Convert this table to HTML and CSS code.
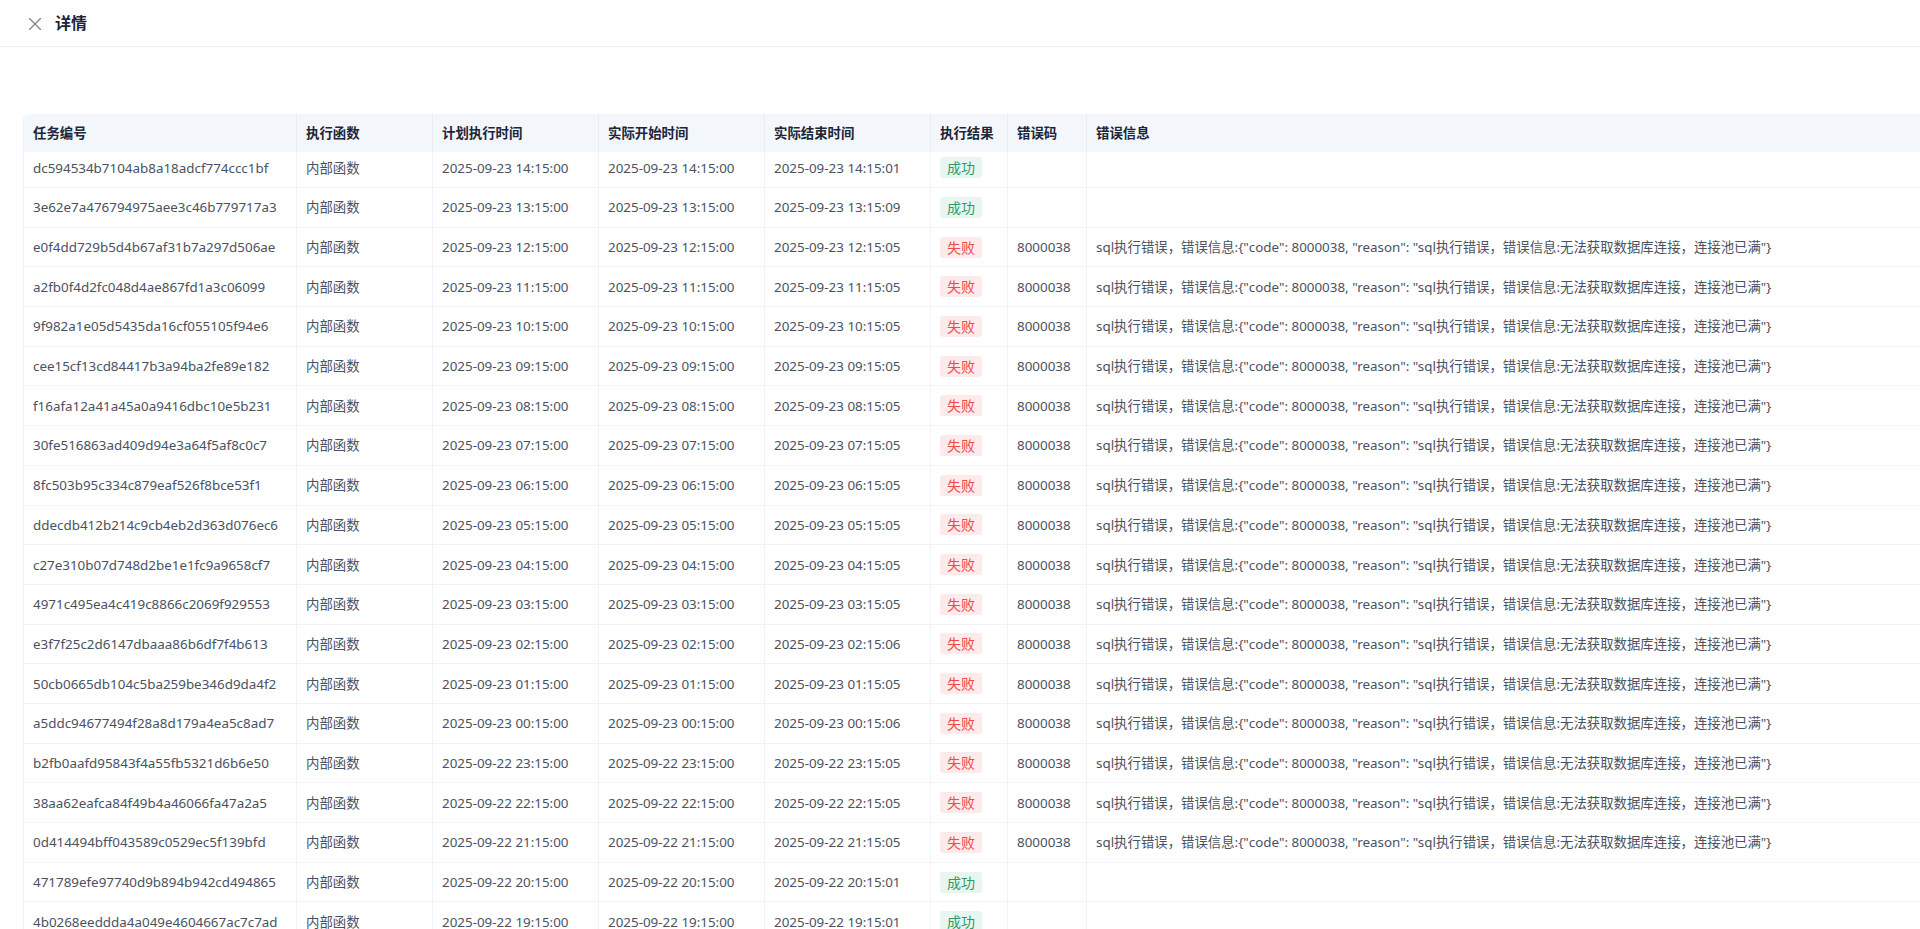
FILE: index.html
```html
<!DOCTYPE html>
<html lang="zh-CN">
<head>
<meta charset="utf-8">
<title>详情</title>
<link rel="stylesheet" href="styles.css">
</head>
<body>
<header class="topbar">
  <span class="close" aria-label="关闭">
    <svg width="12" height="12" viewBox="0 0 12 12"><path d="M0.5 0.5 L11.5 11.5 M11.5 0.5 L0.5 11.5" stroke="#7a808a" stroke-width="1.2" fill="none" stroke-linecap="round"/></svg>
  </span>
  <h1 class="title">详情</h1>
</header>
<main class="content">
  <div class="table">
    <div class="row head">
      <div class="cell">任务编号</div>
      <div class="cell">执行函数</div>
      <div class="cell">计划执行时间</div>
      <div class="cell">实际开始时间</div>
      <div class="cell">实际结束时间</div>
      <div class="cell">执行结果</div>
      <div class="cell">错误码</div>
      <div class="cell">错误信息</div>
    </div>
    <div class="body">
      <div class="row"><div class="cell">dc594534b7104ab8a18adcf774ccc1bf</div><div class="cell">内部函数</div><div class="cell">2025-09-23 14:15:00</div><div class="cell">2025-09-23 14:15:00</div><div class="cell">2025-09-23 14:15:01</div><div class="cell"><span class="tag ok">成功</span></div><div class="cell"></div><div class="cell"></div></div>
      <div class="row"><div class="cell">3e62e7a476794975aee3c46b779717a3</div><div class="cell">内部函数</div><div class="cell">2025-09-23 13:15:00</div><div class="cell">2025-09-23 13:15:00</div><div class="cell">2025-09-23 13:15:09</div><div class="cell"><span class="tag ok">成功</span></div><div class="cell"></div><div class="cell"></div></div>
      <div class="row"><div class="cell">e0f4dd729b5d4b67af31b7a297d506ae</div><div class="cell">内部函数</div><div class="cell">2025-09-23 12:15:00</div><div class="cell">2025-09-23 12:15:00</div><div class="cell">2025-09-23 12:15:05</div><div class="cell"><span class="tag fail">失败</span></div><div class="cell">8000038</div><div class="cell">sql执行错误，错误信息:{"code": 8000038, "reason": "sql执行错误，错误信息:无法获取数据库连接，连接池已满"}</div></div>
      <div class="row"><div class="cell">a2fb0f4d2fc048d4ae867fd1a3c06099</div><div class="cell">内部函数</div><div class="cell">2025-09-23 11:15:00</div><div class="cell">2025-09-23 11:15:00</div><div class="cell">2025-09-23 11:15:05</div><div class="cell"><span class="tag fail">失败</span></div><div class="cell">8000038</div><div class="cell">sql执行错误，错误信息:{"code": 8000038, "reason": "sql执行错误，错误信息:无法获取数据库连接，连接池已满"}</div></div>
      <div class="row"><div class="cell">9f982a1e05d5435da16cf055105f94e6</div><div class="cell">内部函数</div><div class="cell">2025-09-23 10:15:00</div><div class="cell">2025-09-23 10:15:00</div><div class="cell">2025-09-23 10:15:05</div><div class="cell"><span class="tag fail">失败</span></div><div class="cell">8000038</div><div class="cell">sql执行错误，错误信息:{"code": 8000038, "reason": "sql执行错误，错误信息:无法获取数据库连接，连接池已满"}</div></div>
      <div class="row"><div class="cell">cee15cf13cd84417b3a94ba2fe89e182</div><div class="cell">内部函数</div><div class="cell">2025-09-23 09:15:00</div><div class="cell">2025-09-23 09:15:00</div><div class="cell">2025-09-23 09:15:05</div><div class="cell"><span class="tag fail">失败</span></div><div class="cell">8000038</div><div class="cell">sql执行错误，错误信息:{"code": 8000038, "reason": "sql执行错误，错误信息:无法获取数据库连接，连接池已满"}</div></div>
      <div class="row"><div class="cell">f16afa12a41a45a0a9416dbc10e5b231</div><div class="cell">内部函数</div><div class="cell">2025-09-23 08:15:00</div><div class="cell">2025-09-23 08:15:00</div><div class="cell">2025-09-23 08:15:05</div><div class="cell"><span class="tag fail">失败</span></div><div class="cell">8000038</div><div class="cell">sql执行错误，错误信息:{"code": 8000038, "reason": "sql执行错误，错误信息:无法获取数据库连接，连接池已满"}</div></div>
      <div class="row"><div class="cell">30fe516863ad409d94e3a64f5af8c0c7</div><div class="cell">内部函数</div><div class="cell">2025-09-23 07:15:00</div><div class="cell">2025-09-23 07:15:00</div><div class="cell">2025-09-23 07:15:05</div><div class="cell"><span class="tag fail">失败</span></div><div class="cell">8000038</div><div class="cell">sql执行错误，错误信息:{"code": 8000038, "reason": "sql执行错误，错误信息:无法获取数据库连接，连接池已满"}</div></div>
      <div class="row"><div class="cell">8fc503b95c334c879eaf526f8bce53f1</div><div class="cell">内部函数</div><div class="cell">2025-09-23 06:15:00</div><div class="cell">2025-09-23 06:15:00</div><div class="cell">2025-09-23 06:15:05</div><div class="cell"><span class="tag fail">失败</span></div><div class="cell">8000038</div><div class="cell">sql执行错误，错误信息:{"code": 8000038, "reason": "sql执行错误，错误信息:无法获取数据库连接，连接池已满"}</div></div>
      <div class="row"><div class="cell">ddecdb412b214c9cb4eb2d363d076ec6</div><div class="cell">内部函数</div><div class="cell">2025-09-23 05:15:00</div><div class="cell">2025-09-23 05:15:00</div><div class="cell">2025-09-23 05:15:05</div><div class="cell"><span class="tag fail">失败</span></div><div class="cell">8000038</div><div class="cell">sql执行错误，错误信息:{"code": 8000038, "reason": "sql执行错误，错误信息:无法获取数据库连接，连接池已满"}</div></div>
      <div class="row"><div class="cell">c27e310b07d748d2be1e1fc9a9658cf7</div><div class="cell">内部函数</div><div class="cell">2025-09-23 04:15:00</div><div class="cell">2025-09-23 04:15:00</div><div class="cell">2025-09-23 04:15:05</div><div class="cell"><span class="tag fail">失败</span></div><div class="cell">8000038</div><div class="cell">sql执行错误，错误信息:{"code": 8000038, "reason": "sql执行错误，错误信息:无法获取数据库连接，连接池已满"}</div></div>
      <div class="row"><div class="cell">4971c495ea4c419c8866c2069f929553</div><div class="cell">内部函数</div><div class="cell">2025-09-23 03:15:00</div><div class="cell">2025-09-23 03:15:00</div><div class="cell">2025-09-23 03:15:05</div><div class="cell"><span class="tag fail">失败</span></div><div class="cell">8000038</div><div class="cell">sql执行错误，错误信息:{"code": 8000038, "reason": "sql执行错误，错误信息:无法获取数据库连接，连接池已满"}</div></div>
      <div class="row"><div class="cell">e3f7f25c2d6147dbaaa86b6df7f4b613</div><div class="cell">内部函数</div><div class="cell">2025-09-23 02:15:00</div><div class="cell">2025-09-23 02:15:00</div><div class="cell">2025-09-23 02:15:06</div><div class="cell"><span class="tag fail">失败</span></div><div class="cell">8000038</div><div class="cell">sql执行错误，错误信息:{"code": 8000038, "reason": "sql执行错误，错误信息:无法获取数据库连接，连接池已满"}</div></div>
      <div class="row"><div class="cell">50cb0665db104c5ba259be346d9da4f2</div><div class="cell">内部函数</div><div class="cell">2025-09-23 01:15:00</div><div class="cell">2025-09-23 01:15:00</div><div class="cell">2025-09-23 01:15:05</div><div class="cell"><span class="tag fail">失败</span></div><div class="cell">8000038</div><div class="cell">sql执行错误，错误信息:{"code": 8000038, "reason": "sql执行错误，错误信息:无法获取数据库连接，连接池已满"}</div></div>
      <div class="row"><div class="cell">a5ddc94677494f28a8d179a4ea5c8ad7</div><div class="cell">内部函数</div><div class="cell">2025-09-23 00:15:00</div><div class="cell">2025-09-23 00:15:00</div><div class="cell">2025-09-23 00:15:06</div><div class="cell"><span class="tag fail">失败</span></div><div class="cell">8000038</div><div class="cell">sql执行错误，错误信息:{"code": 8000038, "reason": "sql执行错误，错误信息:无法获取数据库连接，连接池已满"}</div></div>
      <div class="row"><div class="cell">b2fb0aafd95843f4a55fb5321d6b6e50</div><div class="cell">内部函数</div><div class="cell">2025-09-22 23:15:00</div><div class="cell">2025-09-22 23:15:00</div><div class="cell">2025-09-22 23:15:05</div><div class="cell"><span class="tag fail">失败</span></div><div class="cell">8000038</div><div class="cell">sql执行错误，错误信息:{"code": 8000038, "reason": "sql执行错误，错误信息:无法获取数据库连接，连接池已满"}</div></div>
      <div class="row"><div class="cell">38aa62eafca84f49b4a46066fa47a2a5</div><div class="cell">内部函数</div><div class="cell">2025-09-22 22:15:00</div><div class="cell">2025-09-22 22:15:00</div><div class="cell">2025-09-22 22:15:05</div><div class="cell"><span class="tag fail">失败</span></div><div class="cell">8000038</div><div class="cell">sql执行错误，错误信息:{"code": 8000038, "reason": "sql执行错误，错误信息:无法获取数据库连接，连接池已满"}</div></div>
      <div class="row"><div class="cell">0d414494bff043589c0529ec5f139bfd</div><div class="cell">内部函数</div><div class="cell">2025-09-22 21:15:00</div><div class="cell">2025-09-22 21:15:00</div><div class="cell">2025-09-22 21:15:05</div><div class="cell"><span class="tag fail">失败</span></div><div class="cell">8000038</div><div class="cell">sql执行错误，错误信息:{"code": 8000038, "reason": "sql执行错误，错误信息:无法获取数据库连接，连接池已满"}</div></div>
      <div class="row"><div class="cell">471789efe97740d9b894b942cd494865</div><div class="cell">内部函数</div><div class="cell">2025-09-22 20:15:00</div><div class="cell">2025-09-22 20:15:00</div><div class="cell">2025-09-22 20:15:01</div><div class="cell"><span class="tag ok">成功</span></div><div class="cell"></div><div class="cell"></div></div>
      <div class="row"><div class="cell">4b0268eeddda4a049e4604667ac7c7ad</div><div class="cell">内部函数</div><div class="cell">2025-09-22 19:15:00</div><div class="cell">2025-09-22 19:15:00</div><div class="cell">2025-09-22 19:15:01</div><div class="cell"><span class="tag ok">成功</span></div><div class="cell"></div><div class="cell"></div></div>
    </div>
  </div>
</main>
</body>
</html>
```

FILE: styles.css
```css
html, body {
  margin: 0;
  padding: 0;
  background: #ffffff;
  overflow: hidden;
}

body {
  font-family: "Noto Sans", "Noto Sans CJK SC", sans-serif;
  font-size: 13.4px;
  color: #4a5261;
}

.topbar {
  height: 47px;
  box-sizing: border-box;
  border-bottom: 1px solid #eff1f4;
  display: flex;
  align-items: center;
  padding-left: 29px;
}

.close {
  display: flex;
  width: 12px;
  height: 12px;
  margin-top: 1px;
}

.title {
  margin: 0 0 0 14px;
  font-size: 16px;
  font-weight: 700;
  color: #1c2638;
  line-height: 24px;
}

.content {
  padding: 67px 0 0 23px;
}

.table {
  border-left: 1px solid #eff1f4;
  border-top-left-radius: 6px;
}

.row {
  display: grid;
  grid-template-columns: 273px 136px 166px 166px 166px 77px 79px 1fr;
  height: 39.7px;
  box-sizing: border-box;
}

.cell {
  display: flex;
  align-items: center;
  padding: 0 9px;
  box-sizing: border-box;
  border-right: 1px solid #f1f3f6;
  border-bottom: 1px solid #f1f3f6;
  white-space: nowrap;
  overflow: hidden;
  line-height: 22px;
}

.cell:last-child {
  border-right: none;
}

.head {
  position: relative;
  z-index: 1;
  height: 38px;
  background: #f3f6fa;
  border-top-left-radius: 6px;
  font-weight: 700;
  color: #1c2638;
}

.head .cell {
  border-right-color: #e9edf3;
  border-bottom: none;
}

.body {
  margin-top: -3.7px;
}

.tag {
  display: inline-block;
  padding: 0 7px;
  height: 21px;
  line-height: 21px;
  border-radius: 3px;
  font-size: 14px;
}

.tag.ok {
  background: #e8f6ef;
  color: #2e9a68;
}

.tag.fail {
  background: #fdeaea;
  color: #ef4a4a;
}
```
